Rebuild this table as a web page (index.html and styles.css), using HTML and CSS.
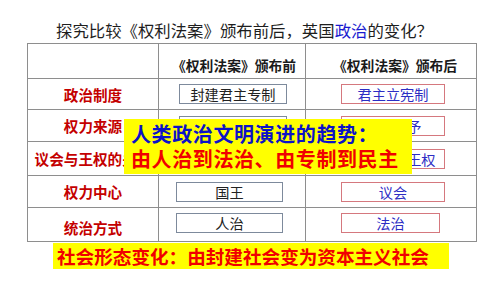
FILE: index.html
```html
<!DOCTYPE html>
<html lang="zh">
<head>
<meta charset="utf-8">
<link rel="stylesheet" href="styles.css">
</head>
<body>
<div class="slide">
  <h1 class="title">探究比较《权利法案》颁布前后，英国<span class="hl">政治</span>的变化？</h1>
  <div class="table">
    <div class="cell head"></div>
    <div class="cell head c2">《权利法案》颁布前</div>
    <div class="cell head c3">《权利法案》颁布后</div>

    <div class="cell label">政治制度</div>
    <div class="cell c2"><span class="box before">封建君主专制</span></div>
    <div class="cell c3"><span class="box after">君主立宪制</span></div>

    <div class="cell label">权力来源</div>
    <div class="cell c2"><span class="box before">君权神授</span></div>
    <div class="cell c3"><span class="box after">议会授予</span></div>

    <div class="cell label">议会与王权的关系</div>
    <div class="cell c2"><span class="box before">王权高于议会</span></div>
    <div class="cell c3"><span class="box after">议会高于王权</span></div>

    <div class="cell label">权力中心</div>
    <div class="cell c2"><span class="box before narrow">国王</span></div>
    <div class="cell c3"><span class="box after">议会</span></div>

    <div class="cell label low">统治方式</div>
    <div class="cell c2 up"><span class="box before narrow">人治</span></div>
    <div class="cell c3 up"><span class="box after short">法治</span></div>
  </div>
  <div class="banner">社会形态变化：由封建社会变为资本主义社会</div>
  <div class="overlay">
    <div class="ol1">人类政治文明演进的趋势：</div>
    <div class="ol2">由人治到法治、由专制到民主</div>
  </div>
</div>
</body>
</html>
```

FILE: styles.css
```css
* { box-sizing: border-box; }
html, body {
  margin: 0;
  padding: 0;
  background: #ffffff;
}
body {
  font-family: "Noto Sans CJK SC", "Noto Sans", sans-serif;
  width: 500px;
  height: 281px;
  overflow: hidden;
}
.slide {
  position: relative;
  width: 500px;
  height: 281px;
  padding-top: 20px;
}
.title {
  margin: 0;
  padding-left: 56px;
  font-size: 16.4px;
  line-height: 20px;
  font-weight: normal;
  color: #1e1e1e;
  white-space: nowrap;
}
.hl { color: #1a1ad0; }

.table {
  margin: 3px 0 0 27px;
  width: 450px;
  display: grid;
  grid-template-columns: 130px 146px 170px;
  grid-template-rows: 34px 30px 31px 33px 31px 33px;
  gap: 1px;
  background: #8e8e8e;
  border: 1px solid #8e8e8e;
}
.cell {
  background: #ffffff;
  display: flex;
  align-items: center;
}
.head {
  align-items: flex-end;
  padding-bottom: 3px;
  font-weight: bold;
  font-size: 13.8px;
  color: #1a1a1a;
  white-space: nowrap;
}
.head.c2 { padding-left: 13px; }
.head.c3 { padding-left: 27px; }
.label {
  justify-content: center;
  color: #c40000;
  font-weight: bold;
  font-size: 14.6px;
  white-space: nowrap;
  overflow: hidden;
}
.label.low { padding-top: 6px; }
.c2 { padding-left: 20px; }
.c3 { padding-left: 35px; }
.up { padding-bottom: 4px; }
.box {
  display: flex;
  justify-content: center;
  align-items: center;
  height: 20px;
  font-size: 14.2px;
  line-height: 18px;
  white-space: nowrap;
}
.before {
  width: 108px;
  border: 1px solid #7d8a9c;
  color: #222222;
}
.before.narrow { width: 107px; margin-left: -3px; }
.after {
  width: 104px;
  border: 1px solid #d5787e;
  color: #2d2dc4;
}
.after.short { width: 99px; }

.banner {
  margin: 1px 0 0 53px;
  width: 396px;
  height: 26px;
  background: #ffff00;
  color: #f00000;
  font-weight: bold;
  font-size: 18.6px;
  line-height: 26px;
  padding-left: 4px;
  white-space: nowrap;
}
.overlay {
  position: absolute;
  left: 124px;
  top: 119px;
  width: 288px;
  height: 55px;
  background: #ffff00;
  padding: 2px 0 0 7px;
  font-weight: bold;
  font-size: 20px;
  line-height: 25px;
  letter-spacing: 0.6px;
  white-space: nowrap;
}
.ol1 { color: #0c12c8; }
.ol2 { color: #f00000; }
```
